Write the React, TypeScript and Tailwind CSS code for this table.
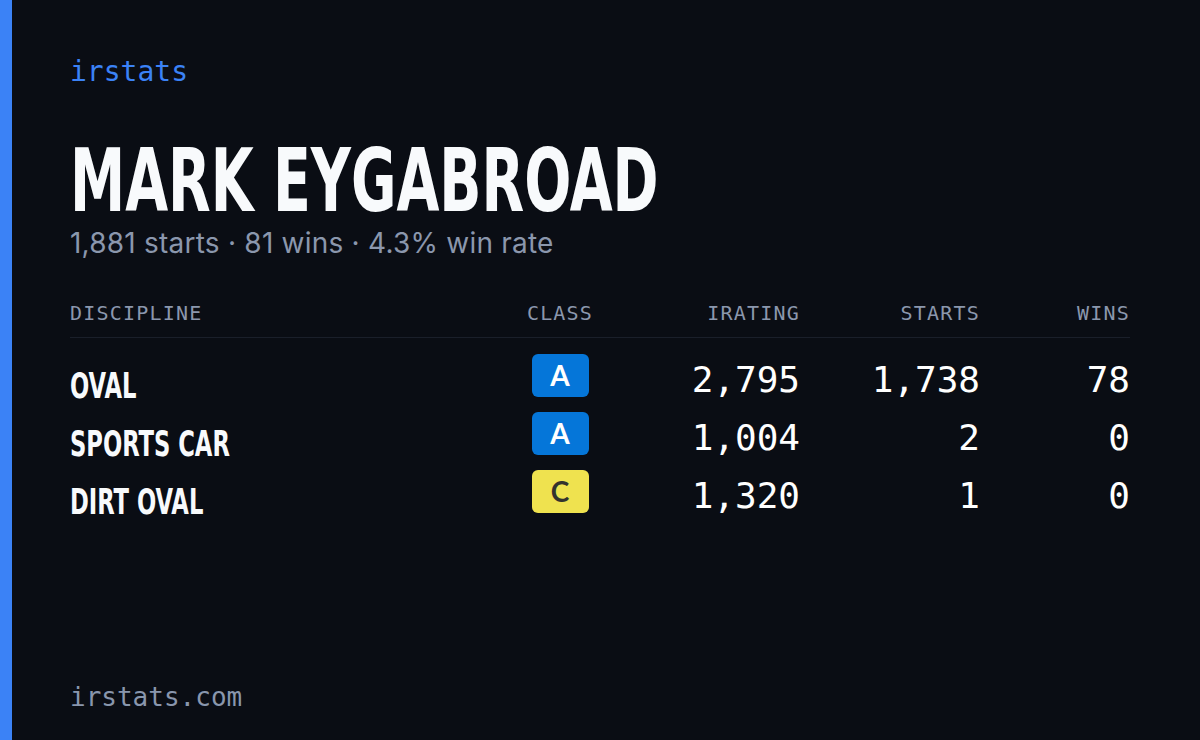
const rows = [
  { name: 'OVAL', cls: 'A', irating: '2,795', starts: '1,738', wins: '78' },
  { name: 'SPORTS CAR', cls: 'A', irating: '1,004', starts: '2', wins: '0' },
  { name: 'DIRT OVAL', cls: 'C', irating: '1,320', starts: '1', wins: '0' },
];

const mono = "font-['DejaVu_Sans_Mono','Liberation_Mono',monospace]";
const narrow = "font-['DejaVu_Sans_Condensed','DejaVu_Sans',sans-serif]";

function ClassBadge({ cls }: { cls: string }) {
  const yellow = cls === 'C';
  return (
    <div
      className={`flex h-[43px] w-[57px] items-center justify-center rounded-[6px] font-['Lato',sans-serif] text-[28px] font-bold leading-none ${
        yellow ? 'bg-[#efe24f] text-[#33332e]' : 'bg-[#0576d9] text-white'
      }`}
    >
      {cls}
    </div>
  );
}

export default function App() {
  return (
    <div className="flex h-[740px] w-[1200px] overflow-hidden bg-[#0a0d14]">
      <div className="w-[12px] shrink-0 bg-[#3b82f6]" />
      <div className="flex flex-1 flex-col pl-[58px] pr-[70px] pt-[52px]">
        <div className={`${mono} text-[28px] leading-[40px] text-[#3b82f6]`}>irstats</div>

        {/* condensed face isn't installed, so squeeze the bold sans horizontally */}
        <div className={`${narrow} mt-[45px] h-[88px] text-[88px] font-bold leading-[88px] text-[#f8fafc]`}>
          <span className="inline-block origin-left scale-x-[0.7] whitespace-nowrap">MARK EYGABROAD</span>
        </div>
        <div className="font-['Inter',sans-serif] text-[28px] leading-[36px] tracking-[0.008em] text-[#8b97ad]">
          1,881 starts · 81 wins · 4.3% win rate
        </div>

        <div
          className={`${mono} mt-[40px] grid grid-cols-[430px_120px_180px_180px_150px] border-b border-[#1a1f2a] pb-[12px] text-[20px] leading-[24px] tracking-[0.06em] text-[#8b97ad]`}
        >
          <div>DISCIPLINE</div>
          <div className="text-center">CLASS</div>
          <div className="text-right">IRATING</div>
          <div className="text-right">STARTS</div>
          <div className="text-right">WINS</div>
        </div>

        <div className="pt-[6px]">
          {rows.map((r) => (
            <div key={r.name} className="grid h-[58px] grid-cols-[430px_120px_180px_180px_150px] items-center">
              <div className={`${narrow} pt-[22px] text-[36px] font-bold leading-[40px] text-[#f8fafc]`}>
                <span className="inline-block origin-left scale-x-[0.7] whitespace-nowrap">{r.name}</span>
              </div>
              <div className="flex justify-center">
                <ClassBadge cls={r.cls} />
              </div>
              <div className={`${mono} pt-[10px] text-right text-[36px] leading-[40px] text-white`}>{r.irating}</div>
              <div className={`${mono} pt-[10px] text-right text-[36px] leading-[40px] text-white`}>{r.starts}</div>
              <div className={`${mono} pt-[10px] text-right text-[36px] leading-[40px] text-white`}>{r.wins}</div>
            </div>
          ))}
        </div>

        <div className={`${mono} mt-auto mb-[26px] text-[26px] leading-[34px] text-[#8996ad]`}>irstats.com</div>
      </div>
    </div>
  );
}
